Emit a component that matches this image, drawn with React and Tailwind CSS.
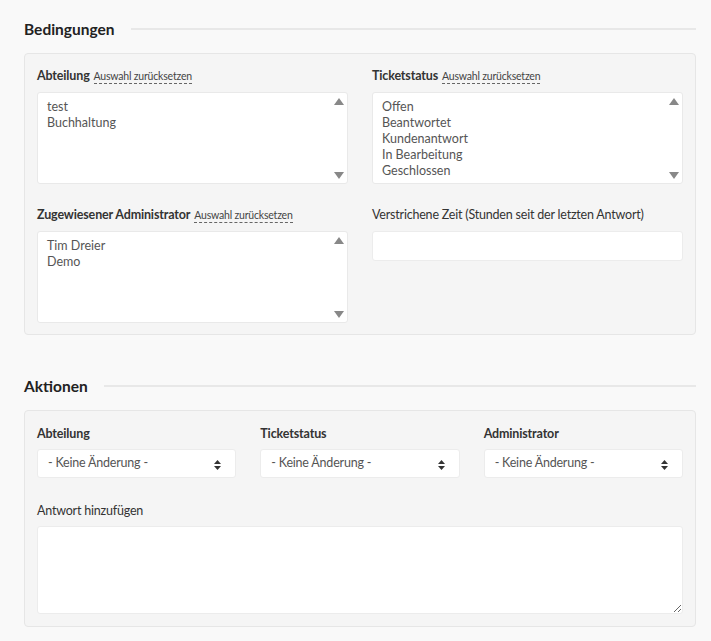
import React from 'react';

const font = { fontFamily: 'Lato, "Noto Sans", sans-serif' };

const SectionTitle = ({ children }) => (
  <div className="flex items-center gap-4 h-5">
    <h3 className="text-[15.5px] font-bold text-[#222] leading-5">{children}</h3>
    <div className="flex-1 h-[2px] bg-[#e8e8e8]" />
  </div>
);

const ResetLabel = ({ title }) => (
  <div className="flex items-baseline gap-1 h-[18px] mb-[7px]">
    <span className="text-[12.5px] font-bold text-[#333] leading-[18px] tracking-[-0.15px]">{title}</span>
    <span className="text-[10.5px] text-[#444] leading-[13px] tracking-[-0.2px] border-b border-dashed border-[#666]">
      Auswahl zurücksetzen
    </span>
  </div>
);

const ListBox = ({ items }) => (
  <div className="relative h-[92px] bg-white border border-[#e9e9e9] rounded-[3px] pl-[9px] pt-[6px] overflow-hidden">
    {items.map((it) => (
      <div key={it} className="text-[12.5px] text-[#555] leading-4">{it}</div>
    ))}
    {/* scroll arrows */}
    <div className="absolute right-[3px] top-[5px] w-0 h-0 border-l-[5px] border-r-[5px] border-b-[7px] border-l-transparent border-r-transparent border-b-[#888]" />
    <div className="absolute right-[3px] bottom-[4px] w-0 h-0 border-l-[5px] border-r-[5px] border-t-[7px] border-l-transparent border-r-transparent border-t-[#888]" />
  </div>
);

const Select = () => (
  <div className="relative h-[29px] bg-white border border-[#ececec] rounded-[3px] pl-[10px] flex items-center">
    <span className="text-[12.5px] text-[#555] tracking-[-0.2px]">- Keine Änderung -</span>
    <svg className="absolute right-[14px] top-[10px]" width="7" height="10" viewBox="0 0 7 10">
      <path d="M3.5 0 L7 4 H0 Z" fill="#333" />
      <path d="M3.5 10 L7 6 H0 Z" fill="#333" />
    </svg>
  </div>
);

export default function App() {
  return (
    <div className="min-h-[641px] bg-[#f9f9f9] pl-6 pr-[15px] pt-[19px]" style={font}>
      <SectionTitle>Bedingungen</SectionTitle>
      <div className="mt-[14px] bg-[#f5f5f5] border border-[#e6e6e6] rounded-[4px] px-[12px] pt-[13px] pb-[11px]">
        <div className="grid grid-cols-2 gap-x-6 gap-y-[22px]">
          <div>
            <ResetLabel title="Abteilung" />
            <ListBox items={['test', 'Buchhaltung']} />
          </div>
          <div>
            <ResetLabel title="Ticketstatus" />
            <ListBox items={['Offen', 'Beantwortet', 'Kundenantwort', 'In Bearbeitung', 'Geschlossen']} />
          </div>
          <div>
            <ResetLabel title="Zugewiesener Administrator" />
            <ListBox items={['Tim Dreier', 'Demo']} />
          </div>
          <div>
            <div className="h-[18px] mb-[7px] text-[12.5px] text-[#333] leading-[18px] tracking-[-0.2px]">
              Verstrichene Zeit (Stunden seit der letzten Antwort)
            </div>
            <div className="h-[30px] bg-white border border-[#ececec] rounded-[3px]" />
          </div>
        </div>
      </div>

      <div className="mt-[41px]">
        <SectionTitle>Aktionen</SectionTitle>
      </div>
      <div className="mt-[14px] bg-[#f5f5f5] border border-[#e6e6e6] rounded-[4px] px-[12px] pt-[14px] pb-[12px]">
        <div className="grid grid-cols-3 gap-x-6">
          {['Abteilung', 'Ticketstatus', 'Administrator'].map((l) => (
            <div key={l}>
              <div className="h-[18px] mb-[6px] text-[12.5px] font-bold text-[#333] leading-[18px] tracking-[-0.15px]">{l}</div>
              <Select />
            </div>
          ))}
        </div>
        <div className="mt-[24px] h-[18px] mb-[6px] text-[12.5px] text-[#333] leading-[18px] tracking-[-0.2px]">Antwort hinzufügen</div>
        <textarea className="block w-full h-[88px] bg-white border border-[#ececec] rounded-[3px] resize-y outline-none" />
      </div>
    </div>
  );
}
